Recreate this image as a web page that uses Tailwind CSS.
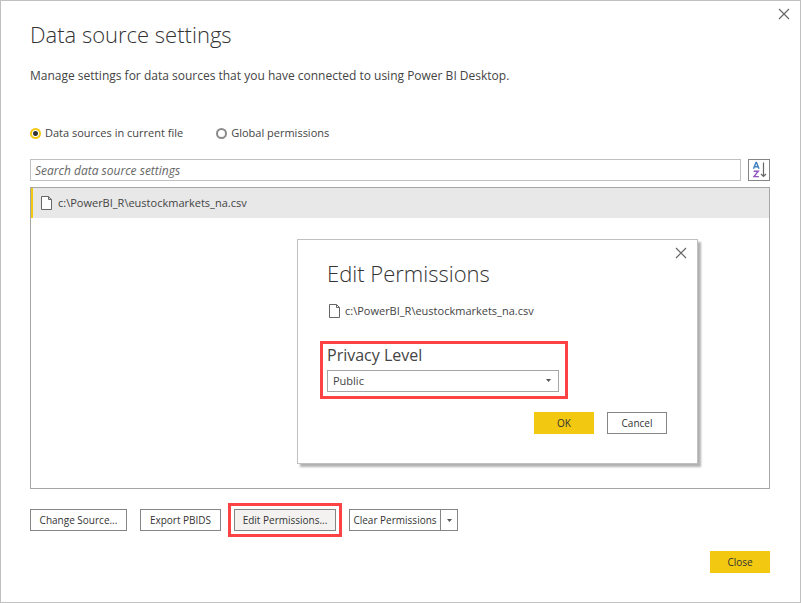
<!DOCTYPE html>
<html lang="en">
<head>
<meta charset="utf-8">
<meta name="viewport" content="width=device-width, initial-scale=1">
<title>Data source settings</title>
<script src="https://cdn.jsdelivr.net/npm/@tailwindcss/browser@4"></script>
</head>
<body class="bg-white font-['Segoe_UI','Open_Sans',sans-serif] text-[11px] text-[#444]">
<main class="relative flex min-h-screen flex-col border border-[#c0c0c0] pb-[29px] pl-[29px] pr-[30px] pt-4">
  <button type="button" aria-label="Close window" class="absolute right-[10px] top-[7px]">
    <svg class="size-3" viewBox="0 0 12 12" fill="none" stroke="#666" stroke-width="1.2"><path d="M1 1l10 10M11 1L1 11"/></svg>
  </button>

  <h1 class="text-[22px] leading-[34px] font-light text-[#333]">Data source settings</h1>
  <p class="mt-[15px] text-xs leading-5">Manage settings for data sources that you have connected to using Power BI Desktop.</p>

  <fieldset class="mt-[37px] flex gap-[33px] leading-5">
    <label class="flex items-center gap-1"><input type="radio" name="scope" checked class="size-[11px] appearance-none rounded-full border-2 border-[#f2c811] bg-[radial-gradient(circle,#333_2px,#fff_3px)]">Data sources in current file</label>
    <label class="flex items-center gap-1"><input type="radio" name="scope" class="size-[11px] appearance-none rounded-full border-2 border-[#8a8a8a]">Global permissions</label>
  </fieldset>

  <div class="mt-4 flex gap-[7px]">
    <input type="search" aria-label="Search data source settings" placeholder="Search data source settings" class="h-[22px] min-w-0 flex-1 border border-[#c0c0c0] px-1 text-xs placeholder:italic placeholder:text-[#666]">
    <button type="button" aria-label="Sort A to Z" class="flex size-[22px] items-center justify-center border border-[#858585]">
      <svg class="size-5" viewBox="0 0 20 20" fill="none">
        <path d="M4.5 8.8L7 2.500h.5L10 8.800M5.400 6.800h3.800" stroke="#3e7fc0" stroke-width="1.400"/>
        <path d="M4.700 11.200h4.600L5 16.600h4.900" stroke="#9054bd" stroke-width="1.400"/>
        <path d="M14.500 2.500v14M12 14l2.500 2.500L17 14" stroke="#666" stroke-width="1.200"/>
      </svg>
    </button>
  </div>

  <section class="mt-[6px] min-h-[302px] flex-1 border border-[#a6a6a6]">
    <ul>
      <li class="flex h-[30px] items-center gap-[6px] border-l-2 border-[#f2c811] bg-[#e8e8e8] pl-2">
        <svg class="h-[14px] w-[11px]" viewBox="0 0 11 14" fill="#fff" stroke="#666"><path d="M.5.5h7l3 3v10H.5zM7.500.5v3h3"/></svg>
        <span>c:\PowerBI_R\eustockmarkets_na.csv</span>
      </li>
    </ul>
  </section>

  <div class="mt-5 flex gap-[13px] text-[10px] text-[#333]">
    <button type="button" class="h-[22px] w-[97px] whitespace-nowrap border border-[#858585]">Change Source...</button>
    <button type="button" class="h-[22px] w-[81px] whitespace-nowrap border border-[#858585]">Export PBIDS</button>
    <button type="button" class="h-[22px] w-[102px] whitespace-nowrap border border-[#858585] bg-[#f3f2f1] outline-3 outline-offset-3 outline-[#fd4343]">Edit Permissions...</button>
    <div class="flex h-[22px] border border-[#858585]">
      <button type="button" class="w-[90px] whitespace-nowrap">Clear Permissions</button>
      <button type="button" aria-label="More clear options" class="flex w-[17px] items-center justify-center border-l border-[#858585]">
        <svg class="h-[3px] w-[5px]" viewBox="0 0 5 3" fill="#555"><path d="M0 0h5L2.500 3z"/></svg>
      </button>
    </div>
  </div>

  <div class="mt-5 flex justify-end text-[10px] text-[#333]">
    <button type="button" class="h-[22px] w-[60px] bg-[#f2c811]">Close</button>
  </div>

  <section role="dialog" aria-labelledby="edit-title" class="absolute right-[102px] top-[238px] w-[401px] border border-[#c0c0c0] bg-white pb-[29px] pl-[29px] pr-[30px] pt-4 shadow-[3px_3px_2px_rgba(0,0,0,0.3)]">
    <button type="button" aria-label="Close dialog" class="absolute right-[10px] top-[7px]">
      <svg class="size-3" viewBox="0 0 12 12" fill="none" stroke="#666" stroke-width="1.200"><path d="M1 1l10 10M11 1L1 11"/></svg>
    </button>
    <h2 id="edit-title" class="text-[22px] leading-[34px] font-light text-[#333]">Edit Permissions</h2>
    <p class="mt-[11px] flex items-center gap-[5px] pl-[2px] leading-5">
      <svg class="h-[14px] w-[11px]" viewBox="0 0 11 14" fill="#fff" stroke="#666"><path d="M.5.5h7l3 3v10H.5zM7.500.5v3h3"/></svg>
      <span>c:\PowerBI_R\eustockmarkets_na.csv</span>
    </p>
    <div class="-ml-[7px] mt-5 w-[248px] border-3 border-[#fd4343] px-1 pb-1">
      <label for="privacy" class="block text-base leading-[22px]">Privacy Level</label>
      <div class="relative mt-1 w-[232px]">
        <select id="privacy" class="block h-[22px] w-full appearance-none border border-[#a6a6a6] bg-white px-[5px]">
          <option>Public</option><option>None</option><option>Organizational</option><option>Private</option>
        </select>
        <svg class="pointer-events-none absolute right-2 top-[9px] h-[3px] w-[5px]" viewBox="0 0 5 3" fill="#555"><path d="M0 0h5L2.500 3z"/></svg>
      </div>
    </div>
    <div class="mt-[13px] flex justify-end gap-[13px] text-[10px] text-[#333]">
      <button type="button" class="h-[22px] w-[60px] bg-[#f2c811]">OK</button>
      <button type="button" class="h-[22px] w-[60px] border border-[#858585]">Cancel</button>
    </div>
  </section>
</main>
</body>
</html>
